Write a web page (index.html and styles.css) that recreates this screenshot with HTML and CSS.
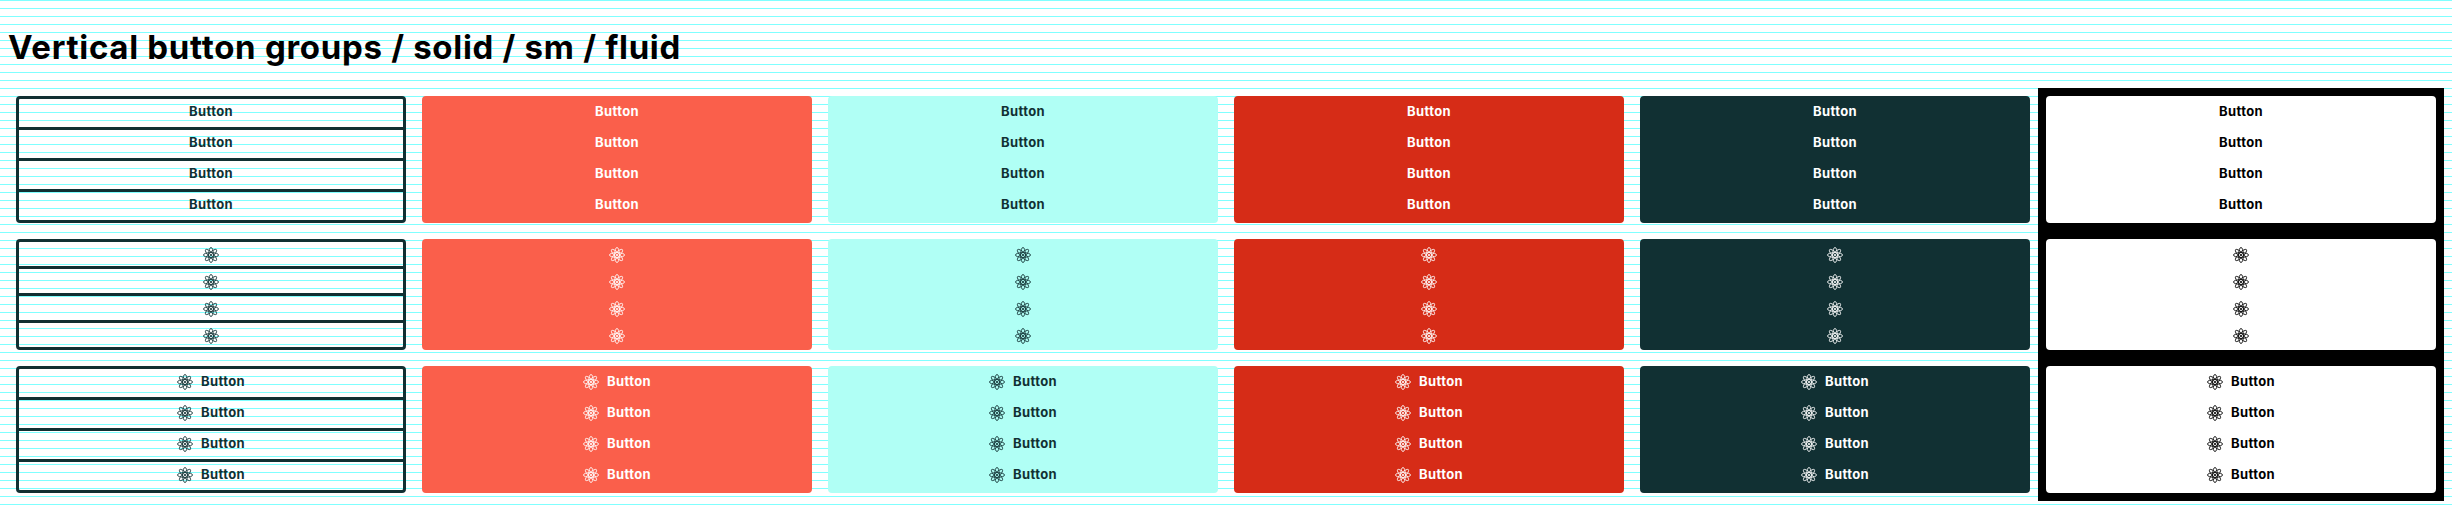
FILE: index.html
```
<!DOCTYPE html>
<html lang="en">
<head>
<meta charset="utf-8">
<title>Button groups</title>
<link rel="stylesheet" href="styles.css">
</head>
<body>
<svg class="sprite" aria-hidden="true">
  <symbol id="atom" viewBox="0 0 32 32">
    <g fill="none" stroke="currentColor" stroke-width="1.7">
      <ellipse cx="16" cy="16" rx="15.2" ry="4.7"/>
      <ellipse cx="16" cy="16" rx="15.2" ry="4.7" transform="rotate(45 16 16)"/>
      <ellipse cx="16" cy="16" rx="15.2" ry="4.7" transform="rotate(90 16 16)"/>
      <ellipse cx="16" cy="16" rx="15.2" ry="4.7" transform="rotate(135 16 16)"/>
    </g>
    <circle cx="16" cy="16" r="2.2" fill="currentColor"/>
  </symbol>
</svg>
<h1 class="title"><span class="title-text">Vertical button groups / solid / sm / fluid</span></h1>
<main class="grid" id="grid"></main>
<script src="main.js"></script>
</body>
</html>
```
FILE: styles.css
```
* { box-sizing: border-box; }
html {
  background: repeating-linear-gradient(to bottom, #80ffff 0 1px, #fff 1px 8px);
}
body {
  margin: 0;
  padding: 0 8px;
  height: 509px;
  overflow: hidden;
  font-family: Inter, "Open Sans", sans-serif;
}
.sprite { display: none; }
.title {
  height: 88px;
  margin: 0;
  padding-top: 27px;
  font-size: 33px;
  line-height: 40px;
  font-weight: 700;
  color: #000;
}
.title-text { letter-spacing: 0.7px; white-space: nowrap; }
.grid {
  display: grid;
  grid-template-columns: repeat(6, 406px);
}
.cell { padding: 8px; }
.cell.inverse { background: #000; }
.group {
  display: flex;
  flex-direction: column;
}
.btn {
  display: flex;
  align-items: center;
  justify-content: center;
  gap: 8px;
  height: 34px;
  margin: 0;
  padding: 0 0 2px;
  border: 3px solid var(--bg);
  border-radius: 0;
  background: var(--bg);
  color: var(--fg);
  font: 700 13px/16px Inter, "Open Sans", sans-serif;
  letter-spacing: 0.4px;
}
.btn + .btn { margin-top: -3px; }
.btn:first-child { border-radius: 4px 4px 0 0; }
.btn:last-child { border-radius: 0 0 4px 4px; }
.label { width: 44px; padding-bottom: 2px; white-space: nowrap; text-align: left; }
.icon { width: 16px; height: 16px; flex: none; }
.icon-only .btn { height: 30px; padding: 2px 0 0; }
.default { --bg: #113033; --fg: #113033; }
.default .btn { background: transparent; }
.primary { --bg: #fa5f4b; --fg: #fff; }
.secondary { --bg: #b0fff5; --fg: #113033; }
.danger { --bg: #d62c17; --fg: #fff; }
.dark { --bg: #113033; --fg: #fff; }
.inverse { --bg: #fff; --fg: #000; }
```
FILE: main.js
```
const themes = ['default', 'primary', 'secondary', 'danger', 'dark', 'inverse'];
const icon = '<svg class="icon"><use href="#atom"/></svg>';
const label = '<span class="label">Button</span>';
const layouts = { 'label-only': label, 'icon-only': icon, 'icon-label': icon + label };

document.getElementById('grid').innerHTML = Object.entries(layouts).map(([layout, content]) =>
  themes.map(theme =>
    `<div class="cell ${theme} ${layout}"><div class="group">` +
    `<button class="btn">${content}</button>`.repeat(4) +
    '</div></div>').join('')).join('');
```
